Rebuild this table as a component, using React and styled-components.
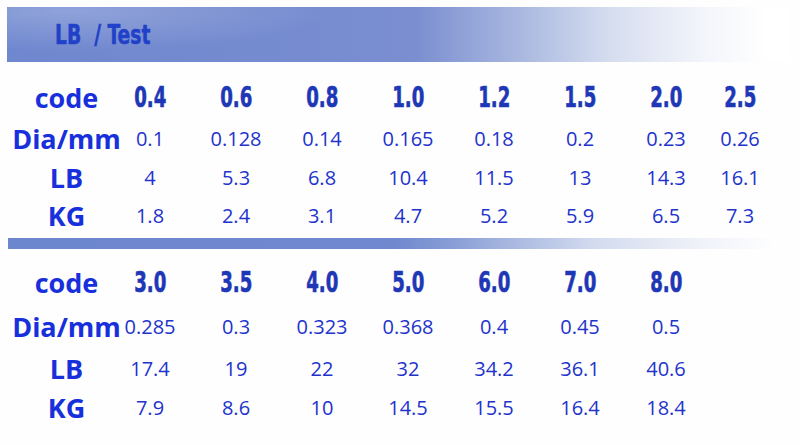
import React from "react";
import styled, { createGlobalStyle } from "styled-components";

const Global = createGlobalStyle`
  html, body { margin: 0; padding: 0; background: #fefefe; }
  body { width: 800px; height: 445px; overflow: hidden; }
`;

const Page = styled.div`
  width: 800px;
  height: 445px;
  display: flex;
  flex-direction: column;
  padding-top: 7px;
  box-sizing: border-box;
`;

const HeaderBar = styled.div`
  margin-left: 7px;
  width: 783px;
  height: 55px;
  display: flex;
  align-items: center;
  padding-left: 48px;
  box-sizing: border-box;
  background:
    radial-gradient(ellipse 260px 40px at 60px 4px, rgba(255,255,255,0.22), rgba(255,255,255,0) 100%),
    linear-gradient(90deg, #6f87cf 0%, #7a8ed0 52%, #a4b3de 64%, #d5ddef 77%, #f3f5fb 89%, #ffffff 97%);
`;

const HeaderTitle = styled.span`
  display: inline-block;
  font-family: "DejaVu Sans Condensed", "DejaVu Sans", sans-serif;
  font-stretch: condensed;
  font-weight: 700;
  font-size: 26px;
  color: #2142c8;
  white-space: pre;
  transform: scaleX(0.8);
  transform-origin: left center;
  -webkit-text-stroke: 0.5px #2142c8;
`;

const Section = styled.div`
  margin-top: ${(p) => p.$top}px;
  margin-left: 8px;
  display: grid;
  grid-template-columns: 99px repeat(7, 86px) 62px;
`;

const Label = styled.div`
  height: ${(p) => p.$h}px;
  display: flex;
  align-items: center;
  justify-content: center;
  padding-left: 18px;
  font-family: "Open Sans", "Noto Sans", sans-serif;
  font-weight: 700;
  font-size: 27px;
  color: #1830dc;
  white-space: nowrap;
`;

const Cell = styled.div`
  height: ${(p) => p.$h}px;
  display: flex;
  align-items: center;
  justify-content: center;
  white-space: nowrap;
`;

const Code = styled.span`
  display: inline-block;
  font-family: "DejaVu Sans Condensed", "DejaVu Sans", sans-serif;
  font-stretch: condensed;
  font-weight: 700;
  font-size: 28px;
  color: #1e37b6;
  transform: scaleX(0.72);
  -webkit-text-stroke: 0.6px #1e37b6;
`;

const Value = styled.span`
  font-family: "Open Sans", "Noto Sans", sans-serif;
  font-size: 20px;
  color: #2233cc;
`;

const Divider = styled.div`
  margin-top: 4px;
  margin-left: 8px;
  width: 772px;
  height: 11px;
  background: linear-gradient(90deg, #6d87cf 0%, #6f88cf 50%, #8a9fd6 58%, #b3c1e4 68%, #d3dbef 76%, #eef1f8 89%, #ffffff 100%);
`;

const top = {
  codes: ["0.4", "0.6", "0.8", "1.0", "1.2", "1.5", "2.0", "2.5"],
  rows: [
    { label: "Dia/mm", h: 42, vals: ["0.1", "0.128", "0.14", "0.165", "0.18", "0.2", "0.23", "0.26"] },
    { label: "LB", h: 37, vals: ["4", "5.3", "6.8", "10.4", "11.5", "13", "14.3", "16.1"] },
    { label: "KG", h: 38, vals: ["1.8", "2.4", "3.1", "4.7", "5.2", "5.9", "6.5", "7.3"] },
  ],
  codeH: 40,
};

const bottom = {
  codes: ["3.0", "3.5", "4.0", "5.0", "6.0", "7.0", "8.0", ""],
  rows: [
    { label: "Dia/mm", h: 48, vals: ["0.285", "0.3", "0.323", "0.368", "0.4", "0.45", "0.5", ""] },
    { label: "LB", h: 36, vals: ["17.4", "19", "22", "32", "34.2", "36.1", "40.6", ""] },
    { label: "KG", h: 42, vals: ["7.9", "8.6", "10", "14.5", "15.5", "16.4", "18.4", ""] },
  ],
  codeH: 40,
};

function Table({ data, topGap }) {
  return (
    <Section $top={topGap}>
      <Label $h={data.codeH}>code</Label>
      {data.codes.map((c, i) => (
        <Cell key={"c" + i} $h={data.codeH}>
          <Code>{c}</Code>
        </Cell>
      ))}
      {data.rows.map((r) => (
        <React.Fragment key={r.label}>
          <Label $h={r.h}>{r.label}</Label>
          {r.vals.map((v, i) => (
            <Cell key={r.label + i} $h={r.h}>
              <Value>{v}</Value>
            </Cell>
          ))}
        </React.Fragment>
      ))}
    </Section>
  );
}

export default function App() {
  return (
    <Page>
      <Global />
      <HeaderBar>
        <HeaderTitle>{"LB  / Test"}</HeaderTitle>
      </HeaderBar>
      <Table data={top} topGap={15} />
      <Divider />
      <Table data={bottom} topGap={13} />
    </Page>
  );
}
